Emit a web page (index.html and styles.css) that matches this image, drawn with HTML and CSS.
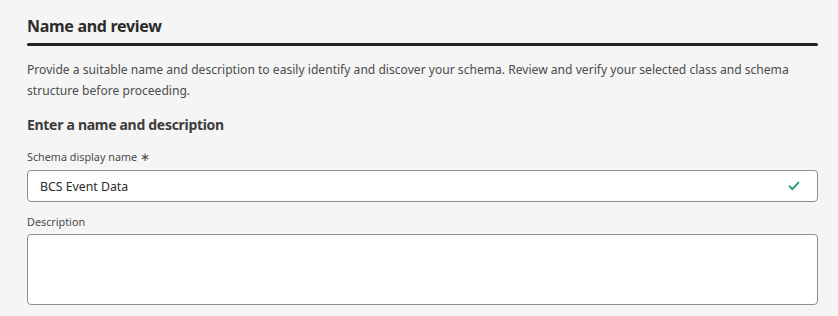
FILE: index.html
```html
<!DOCTYPE html>
<html lang="en">
<head>
    <meta charset="UTF-8">
    <meta name="viewport" content="width=device-width, initial-scale=1.0">
    <title>Name and review</title>
    <link rel="stylesheet" href="styles.css">
</head>
<body>
    <div class="panel">
        <!-- Section title -->
        <h2 class="panel-title">Name and review</h2>
        <div class="title-rule"></div>

        <p class="intro">Provide a suitable name and description to easily identify and discover your schema. Review and verify your selected class and schema structure before proceeding.</p>

        <h3 class="sub-title">Enter a name and description</h3>

        <form class="schema-form">
            <label class="field-label" for="displayName">Schema display name <span class="required">&#x2217;</span></label>
            <div class="input-wrap">
                <input type="text" id="displayName" class="text-input" value="BCS Event Data">
                <svg class="valid-icon" width="12" height="12" viewBox="0 0 12 12" aria-hidden="true">
                    <path d="M1.6 6.4 L4.4 9.2 L10.4 2.6" fill="none" stroke="#2d9d78" stroke-width="2" stroke-linecap="round" stroke-linejoin="round"/>
                </svg>
            </div>

            <label class="field-label desc-label" for="description">Description</label>
            <textarea id="description" class="text-area"></textarea>
        </form>
    </div>
</body>
</html>
```

FILE: styles.css
```css
/* Basic setup */
* {
    margin: 0;
    padding: 0;
    box-sizing: border-box;
}

body {
    font-family: 'Source Sans Pro', 'Noto Sans', 'Open Sans', sans-serif;
    background-color: #f5f5f5;
    color: #4b4b4b;
}

.panel {
    padding: 16px 20px 0 27px;
}

.panel-title {
    font-size: 16px;
    font-weight: 700;
    color: #2c2c2c;
    line-height: 20px;
    letter-spacing: -0.3px;
}

.title-rule {
    height: 3px;
    background-color: #222;
    border-radius: 2px;
    margin-top: 7px;
}

.intro {
    font-size: 12.1px;
    line-height: 21px;
    margin-top: 13px;
    color: #4b4b4b;
}

.sub-title {
    font-size: 14px;
    font-weight: 700;
    color: #3c3c3c;
    margin-top: 14px;
    line-height: 20px;
    letter-spacing: -0.3px;
}

.schema-form {
    display: flex;
    flex-direction: column;
    margin-top: 15px;
}

.field-label {
    font-size: 10.8px;
    color: #4b4b4b;
    line-height: 14px;
    margin-bottom: 6px;
}

.required {
    font-size: 12px;
}

.input-wrap {
    position: relative;
}

.text-input {
    width: 100%;
    height: 32px;
    border: 1px solid #8e8e8e;
    border-radius: 4px;
    background: #fff;
    padding: 0 12px;
    font-family: inherit;
    font-size: 12.3px;
    color: #2c2c2c;
}

.valid-icon {
    position: absolute;
    right: 18px;
    top: 10px;
}

.desc-label {
    margin-top: 13px;
    margin-bottom: 5px;
}

.text-area {
    width: 100%;
    height: 71px;
    border: 1px solid #8e8e8e;
    border-radius: 4px;
    background: #fff;
    resize: none;
    font-family: inherit;
}
```
